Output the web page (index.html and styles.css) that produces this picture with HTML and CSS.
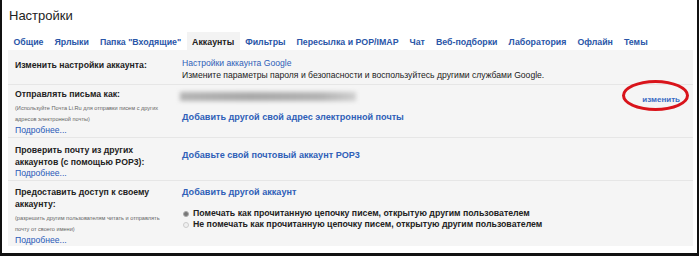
FILE: index.html
```html
<!DOCTYPE html>
<html lang="ru">
<head>
  <meta charset="UTF-8" />
  <title>Настройки</title>
  <link rel="stylesheet" href="styles.css">
</head>
<body>

  <div class="frame">
    <div class="title">Настройки</div>

    <div class="tabs">
      <a class="tab">Общие</a>
      <a class="tab">Ярлыки</a>
      <a class="tab">Папка "Входящие"</a>
      <a class="tab active">Аккаунты</a>
      <a class="tab">Фильтры</a>
      <a class="tab">Пересылка и POP/IMAP</a>
      <a class="tab">Чат</a>
      <a class="tab">Веб-подборки</a>
      <a class="tab">Лаборатория</a>
      <a class="tab">Офлайн</a>
      <a class="tab">Темы</a>
    </div>

    <div class="panel">

      <div class="row row-account">
        <div class="label">
          <div class="name">Изменить настройки аккаунта:</div>
        </div>
        <div class="value">
          <a class="link">Настройки аккаунта Google</a>
          <div class="text">Измените параметры пароля и безопасности и воспользуйтесь другими службами Google.</div>
        </div>
        <div class="extra"></div>
      </div>

      <div class="row row-send">
        <div class="label">
          <div class="name">Отправлять письма как:</div>
          <div class="note">(Используйте Почта Li.Ru для отправки писем с других<br>адресов электронной почты)</div>
          <a class="more">Подробнее...</a>
        </div>
        <div class="value">
          <div class="blurred"></div>
          <a class="link bold add">Добавить другой свой адрес электронной почты</a>
        </div>
        <div class="extra">
          <a class="edit">изменить<span class="circle"></span></a>
        </div>
      </div>

      <div class="row row-pop">
        <div class="label">
          <div class="name">Проверить почту из других<br>аккаунтов (с помощью POP3):</div>
          <a class="more">Подробнее...</a>
        </div>
        <div class="value">
          <a class="link bold">Добавьте свой почтовый аккаунт POP3</a>
        </div>
        <div class="extra"></div>
      </div>

      <div class="row row-access">
        <div class="label">
          <div class="name">Предоставить доступ к своему<br>аккаунту:</div>
          <div class="note">(разрешить другим пользователям читать и отправлять<br>почту от своего имени)</div>
          <a class="more">Подробнее...</a>
        </div>
        <div class="value">
          <a class="link bold">Добавить другой аккаунт</a>
          <div class="options">
            <div class="option"><span class="radio checked"></span>Помечать как прочитанную цепочку писем, открытую другим пользователем</div>
            <div class="option"><span class="radio"></span>Не помечать как прочитанную цепочку писем, открытую другим пользователем</div>
          </div>
        </div>
        <div class="extra"></div>
      </div>

    </div>
  </div>

</body>
</html>
```

FILE: styles.css
```css
body {
  margin: 0;
  padding: 0;
  font-family: 'Liberation Sans', Arial, sans-serif;
  background: #fff;
  color: #222;
}

.frame {
  width: 685px;
  height: 253px;
  border-left: 2px solid #111;
  border-right: 2px solid #111;
  border-bottom: 3px solid #111;
  padding: 0 4px 0 6px;
  display: flex;
  flex-direction: column;
}

.title {
  height: 32px;
  line-height: 32px;
  font-size: 13px;
  color: #222;
  padding-left: 1px;
}

.tabs {
  height: 18px;
  display: flex;
  align-items: stretch;
}

.tab {
  padding: 0 5.5px;
  line-height: 20px;
  font-size: 8.8px;
  font-weight: bold;
  color: #2a56a8;
  white-space: nowrap;
}

.tab.active {
  background: #f3f3f3;
  color: #222;
}

.panel {
  background: #f5f5f5;
  height: 196px;
}

.row {
  display: grid;
  grid-template-columns: 167px 1fr auto;
  padding-left: 7px;
  box-sizing: border-box;
  border-top: 1px solid #e6e6e6;
}

.row:first-child {
  border-top: none;
}

.row-account { height: 34px; padding-top: 9px; }
.row-send    { height: 53px; padding-top: 3px; }
.row-pop     { height: 43px; padding-top: 6px; }
.row-access  { height: 66px; padding-top: 5px; }

.name {
  font-size: 8.7px;
  font-weight: bold;
  line-height: 12px;
  color: #222;
}

.note {
  font-size: 5.6px;
  line-height: 11px;
  color: #666;
  margin-top: 3px;
}

.more {
  display: block;
  font-size: 8.6px;
  line-height: 11px;
  color: #2a5ab8;
}

.value {
  font-size: 8.6px;
  line-height: 12px;
}

.link {
  display: block;
  color: #2f5fb8;
  line-height: 12px;
}

.link.bold {
  font-weight: bold;
  font-size: 9.1px;
}

.row-account .value { margin-top: -2px; }
.row-pop .value { padding-top: 5px; }

.text {
  color: #222;
}

.blurred {
  width: 176px;
  height: 9px;
  margin: 4px 0 0 -2px;
  background: linear-gradient(90deg, #b4b4b4, #a8a8a8 40%, #b2b2b2 80%, #cfcfcf);
  filter: blur(2px);
}

.add {
  margin-top: 10px;
}

.extra {
  padding-right: 13px;
}

.edit {
  position: relative;
  display: block;
  margin-top: 6px;
  font-size: 8px;
  font-weight: bold;
  line-height: 12px;
  color: #3a6cc4;
}

.circle {
  position: absolute;
  left: -20px;
  top: -14px;
  width: 61px;
  height: 25px;
  border: 3px solid #d9141b;
  border-radius: 50%;
}

.options {
  margin-top: 10px;
}

.option {
  display: flex;
  align-items: center;
  font-size: 8.75px;
  font-weight: bold;
  line-height: 11px;
  color: #222;
}

.radio {
  width: 4px;
  height: 4px;
  border: 1px solid #ccc;
  border-radius: 50%;
  background: #f0f0f0;
  margin: 0 4px 0 1px;
}

.radio.checked {
  background: #777;
  border-color: #aaa;
}
```
